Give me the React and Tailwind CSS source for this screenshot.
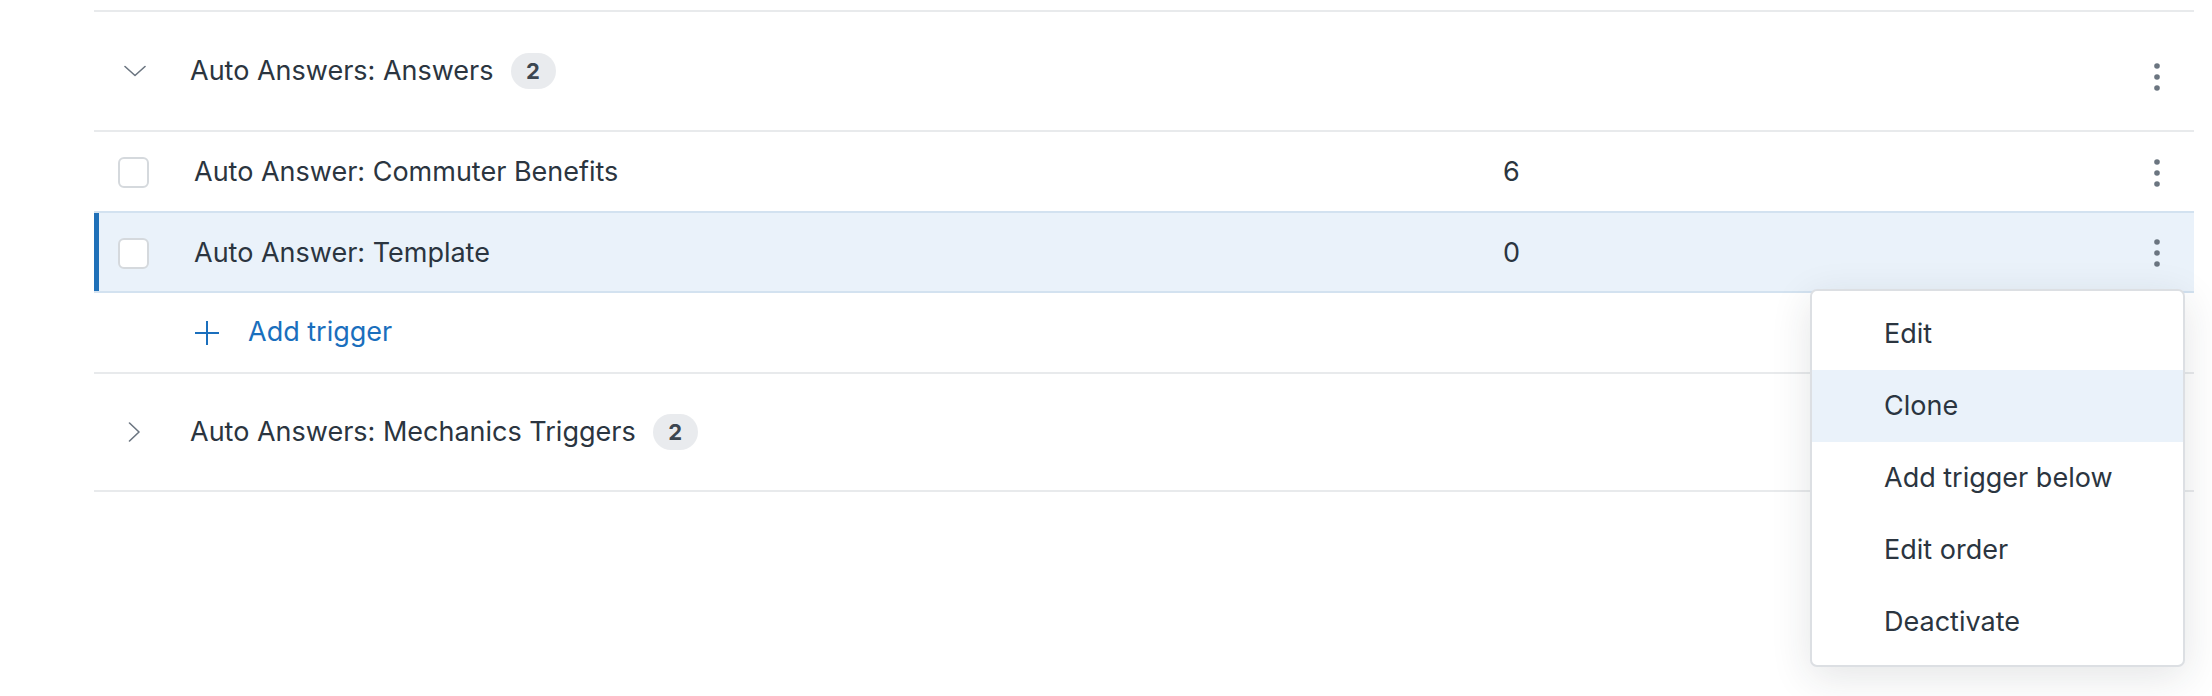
import React from 'react'

const textColor = 'text-[#2b3540]'

function ChevronDown() {
  return (
    <svg width="22" height="12" viewBox="0 0 22 12" fill="none">
      <path d="M1 1.5L11 10.5L21 1.5" stroke="#6b7580" strokeWidth="1.6" strokeLinecap="round" strokeLinejoin="round" />
    </svg>
  )
}

function ChevronRight() {
  return (
    <svg width="13" height="20" viewBox="0 0 13 20" fill="none">
      <path d="M1.5 1L11 10L1.5 19" stroke="#6b7580" strokeWidth="1.6" strokeLinecap="round" strokeLinejoin="round" />
    </svg>
  )
}

function Kebab() {
  return (
    <svg width="6" height="28" viewBox="0 0 6 28" fill="#6b7580">
      <circle cx="3" cy="3" r="2.8" />
      <circle cx="3" cy="14" r="2.8" />
      <circle cx="3" cy="25" r="2.8" />
    </svg>
  )
}

function PlusIcon() {
  return (
    <svg width="26" height="26" viewBox="0 0 26 26" fill="none">
      <path d="M13 1V25M1 13H25" stroke="#1a6fbd" strokeWidth="2" />
    </svg>
  )
}

function Badge({ count }) {
  return (
    <span className="ml-[17px] inline-flex h-[36px] min-w-[45px] items-center justify-center rounded-full bg-[#e9ebee] px-3 text-[22px] font-bold text-[#3c4650]">
      {count}
    </span>
  )
}

function Checkbox() {
  return <span className="block h-[31px] w-[31px] rounded-[6px] border-2 border-[#d5d9dd] bg-white" />
}

function GroupHeader({ open, title, count, className = '' }) {
  return (
    <div className={`flex items-center border-t-2 border-[#e8eaec] ${className}`}>
      <div className="flex w-[96px] items-center pl-[30px]">
        {open ? <ChevronDown /> : <span className="pl-[4px]"><ChevronRight /></span>}
      </div>
      <span className={`text-[27px] ${textColor}`}>{title}</span>
      <Badge count={count} />
      <div className="flex-1" />
      {open && (
        <div className="flex w-[74px] justify-center pt-[12px]">
          <Kebab />
        </div>
      )}
    </div>
  )
}

function TriggerRow({ name, count, selected }) {
  const base = selected
    ? 'border-y-2 border-[#d3e2f0] bg-[#eaf2fa] shadow-[inset_5px_0_0_#1f70b8] h-[82px]'
    : 'border-t-2 border-[#e8eaec] h-[81px]'
  return (
    <div className={`flex items-center pt-[2px] ${base}`}>
      <div className="w-[100px] pl-[24px]">
        <Checkbox />
      </div>
      <span className={`w-[1309px] text-[27px] ${textColor}`}>{name}</span>
      <span className={`flex-1 text-[27px] ${textColor}`}>{count}</span>
      <div className="flex w-[74px] justify-center">
        <Kebab />
      </div>
    </div>
  )
}

const menuItems = ['Edit', 'Clone', 'Add trigger below', 'Edit order', 'Deactivate']

function RowMenu() {
  return (
    <div className="absolute right-[9px] top-[279px] w-[375px] rounded-[7px] border-2 border-[#dcdfe3] bg-white py-[7px] shadow-[0_10px_40px_rgba(30,40,50,0.12)]">
      {menuItems.map((item) => (
        <div
          key={item}
          className={`flex h-[72px] items-center pl-[72px] text-[27px] ${textColor} ${item === 'Clone' ? 'bg-[#eaf2fa]' : ''}`}
        >
          {item}
        </div>
      ))}
    </div>
  )
}

export default function App() {
  return (
    <div className="min-h-[696px] bg-white pl-[94px] pr-[18px] pt-[10px] font-['Inter','Noto_Sans',sans-serif] antialiased">
      <div className="relative">
        <GroupHeader open title="Auto Answers: Answers" count={2} className="h-[120px]" />
        <TriggerRow name="Auto Answer: Commuter Benefits" count={6} />
        <TriggerRow name="Auto Answer: Template" count={0} selected />
        <div className="flex h-[79px] items-center pl-[100px]">
          <PlusIcon />
          <span className="ml-[28px] text-[27px] text-[#1a6fbd]">Add trigger</span>
        </div>
        <GroupHeader title="Auto Answers: Mechanics Triggers" count={2} className="h-[120px] border-b-2" />
        <RowMenu />
      </div>
    </div>
  )
}
